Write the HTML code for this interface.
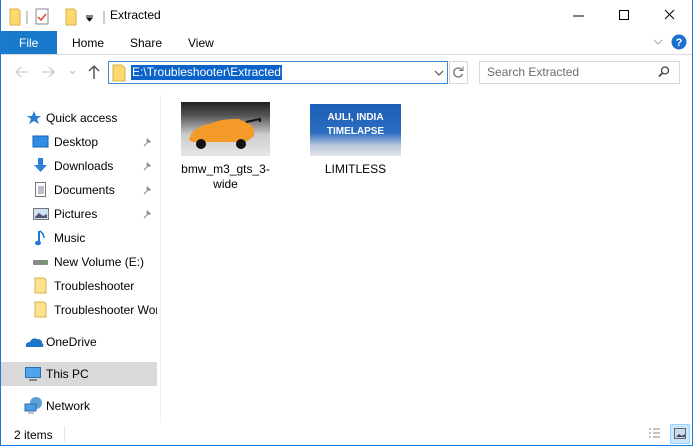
<!DOCTYPE html>
<html><head><meta charset="utf-8">
<style>
*{margin:0;padding:0;box-sizing:border-box}
body{width:693px;height:446px;overflow:hidden;background:#fff;font-family:"Liberation Sans",sans-serif;font-size:12px;color:#000;position:relative}
.abs{position:absolute}
.frame{position:absolute;left:0;top:0;width:693px;height:446px;border:1px solid #1a7ad4;border-top:none;pointer-events:none}
.t{position:absolute;white-space:nowrap}
.nav .t{font-size:12px}
</style></head><body>
<svg class="abs" style="left:8px;top:6px" width="100" height="22">
<path d="M2 3h8l2 2v14H2z" fill="#fcd96f" stroke="#d9b24a"/>
<line x1="19" y1="5" x2="19" y2="18" stroke="#999"/>
<rect x="28" y="3" width="12" height="15" fill="#fff" stroke="#888"/>
<path d="M30 11l3 3 5-6" stroke="#d43" fill="none" stroke-width="1.5"/>
<path d="M58 3h8l2 2v14H58z" fill="#fcd96f" stroke="#d9b24a"/>
<path d="M78 10h7M79 12l2.5 3 2.5-3z" stroke="#000" fill="#000"/>
<line x1="96" y1="5" x2="96" y2="18" stroke="#999"/>
</svg>
<div class="t" style="left:110px;top:8px;font-size:12px">Extracted</div>
<svg class="abs" style="left:560px;top:6px" width="130" height="20">
<line x1="13" y1="10" x2="24" y2="10" stroke="#000"/>
<rect x="59.5" y="4.5" width="9" height="9" fill="none" stroke="#000"/>
<path d="M105 4l9 9M114 4l-9 9" stroke="#000"/>
</svg>
<div class="abs" style="left:1px;top:31px;width:56px;height:23px;background:#1979ca"></div>
<div class="t" style="left:19px;top:36px;color:#fff">File</div>
<div class="t" style="left:72px;top:36px">Home</div>
<div class="t" style="left:130px;top:36px">Share</div>
<div class="t" style="left:188px;top:36px">View</div>
<svg class="abs" style="left:650px;top:33px" width="40" height="20">
<path d="M4 7l4 4 4-4" stroke="#aaa" fill="none"/>
<circle cx="29" cy="9" r="7.5" fill="#1d6fd1"/>
<text x="29" y="13" font-size="11" font-weight="bold" fill="#fff" text-anchor="middle" font-family="Liberation Sans">?</text>
</svg>
<div class="abs" style="left:1px;top:54px;width:691px;height:1px;background:#dadbdc"></div>
<svg class="abs" style="left:10px;top:62px" width="95" height="20">
<path d="M6 10h12M6 10l5-5M6 10l5 5" stroke="#ccc" fill="none" stroke-width="1.3"/>
<path d="M32 10h12M44 10l-5-5M44 10l-5 5" stroke="#ccc" fill="none" stroke-width="1.3"/>
<path d="M60 9l2.5 2.5 2.5-2.5" stroke="#bbb" fill="none"/>
<path d="M84 17V4M84 4l-5 5M84 4l5 5" stroke="#555" fill="none" stroke-width="1.5"/>
</svg>
<div class="abs" style="left:108px;top:61px;width:340px;height:23px;border:1px solid #3c8ad6"></div>
<svg class="abs" style="left:112px;top:64px" width="16" height="18"><path d="M1 1h9l3 3v13H1z" fill="#fcd96f" stroke="#d9b24a"/></svg>
<div class="t" style="left:131px;top:65px;background:#0a63c9;color:#fff;padding:0 1px;line-height:15px">E:\Troubleshooter\Extracted</div>
<svg class="abs" style="left:432px;top:66px" width="14" height="14"><path d="M3 5l4 4 4-4" stroke="#444" fill="none"/></svg>
<div class="abs" style="left:449px;top:61px;width:19px;height:23px;border:1px solid #d9d9d9"></div>
<svg class="abs" style="left:451px;top:65px" width="15" height="15"><path d="M11 5A4.5 4.5 0 1 0 11.5 9" stroke="#777" fill="none" stroke-width="1.3"/><path d="M8 3.5h4v-4" stroke="#777" fill="none" transform="translate(0,2)"/></svg>
<div class="abs" style="left:479px;top:61px;width:201px;height:23px;border:1px solid #d9d9d9"></div>
<div class="t" style="left:487px;top:65px;color:#6d6d6d">Search Extracted</div>
<svg class="abs" style="left:657px;top:65px" width="14" height="14"><circle cx="8" cy="5.5" r="3.5" stroke="#444" fill="none" stroke-width="1.3"/><path d="M5.5 8L2 11.5" stroke="#444" stroke-width="1.6"/></svg>
<div class="abs" style="left:1px;top:362px;width:156px;height:24px;background:#d9d9d9"></div>
<div class="abs" style="left:160px;top:95px;width:1px;height:327px;background:#f0f0f0"></div>
<div class="nav">
<svg class="abs" style="left:24px;top:110px" width="20" height="16"><path d="M10 1l2 5h5l-4 3 2 5-5-3-5 3 2-5-4-3h5z" fill="#2a7fd4"/></svg>
<div class="t" style="left:46px;top:111px">Quick access</div>
<svg class="abs" style="left:32px;top:134px" width="18" height="16"><rect x="1" y="2" width="15" height="11" fill="#2f8de4" stroke="#1560b0"/></svg>
<div class="t" style="left:54px;top:135px">Desktop</div>
<svg class="abs" style="left:32px;top:157px" width="18" height="18"><path d="M6 1h5v7h4l-6.5 7L2 8h4z" fill="#2f80d8"/></svg>
<div class="t" style="left:54px;top:159px">Downloads</div>
<svg class="abs" style="left:34px;top:181px" width="14" height="18"><rect x="1.5" y="1.5" width="10" height="14" fill="#fff" stroke="#777"/><path d="M4 6h6M4 8h6M4 10h6M4 12h6" stroke="#779"/></svg>
<div class="t" style="left:54px;top:183px">Documents</div>
<svg class="abs" style="left:32px;top:206px" width="18" height="16"><rect x="1.5" y="2.5" width="15" height="11" fill="#cfe0ee" stroke="#777"/><path d="M3 11l4-4 4 3 4-2v4H3z" fill="#557"/></svg>
<div class="t" style="left:54px;top:207px">Pictures</div>
<svg class="abs" style="left:34px;top:229px" width="14" height="18"><path d="M5 2v11" stroke="#1e7ad6" stroke-width="2"/><ellipse cx="4" cy="14" rx="3" ry="2.3" fill="#1e7ad6"/><path d="M6 2q4 3 4 7" stroke="#1e7ad6" fill="none" stroke-width="1.5"/></svg>
<div class="t" style="left:54px;top:231px">Music</div>
<svg class="abs" style="left:32px;top:258px" width="18" height="10"><rect x="1" y="2" width="15" height="5" rx="1" fill="#888"/><rect x="12" y="3" width="2" height="2" fill="#3c3"/></svg>
<div class="t" style="left:54px;top:255px">New Volume (E:)</div>
<svg class="abs" style="left:34px;top:277px" width="14" height="18"><path d="M1 1h9l2 2v13H1z" fill="#fde38e" stroke="#d9b24a"/></svg>
<div class="t" style="left:54px;top:279px">Troubleshooter</div>
<svg class="abs" style="left:34px;top:301px" width="14" height="18"><path d="M1 1h9l2 2v13H1z" fill="#fde38e" stroke="#d9b24a"/></svg>
<div class="t" style="left:54px;top:303px;width:103px;overflow:hidden">Troubleshooter Work</div>
<svg class="abs" style="left:142px;top:136px" width="12" height="96"><g fill="#888"><path d="M3 9l3-3M5 2l4 4-2 1-2-2-1 2z"/><path d="M3 33l3-3M5 26l4 4-2 1-2-2-1 2z"/><path d="M3 57l3-3M5 50l4 4-2 1-2-2-1 2z"/><path d="M3 81l3-3M5 74l4 4-2 1-2-2-1 2z"/></g><g stroke="#888"><path d="M2 10l4-4M2 34l4-4M2 58l4-4M2 82l4-4"/></g></svg>
<svg class="abs" style="left:24px;top:335px" width="20" height="14"><path d="M2 12q-1-5 4-5q2-5 7-3q5 0 5 4q2 1 1 4z" fill="#1e74c9"/></svg>
<div class="t" style="left:46px;top:335px">OneDrive</div>
<svg class="abs" style="left:24px;top:366px" width="20" height="17"><rect x="1.5" y="1.5" width="15" height="10" fill="#4fa5ec" stroke="#2a6eb5"/><path d="M5 14h8" stroke="#888" stroke-width="2"/></svg>
<div class="t" style="left:46px;top:367px">This PC</div>
<svg class="abs" style="left:24px;top:396px" width="20" height="18"><circle cx="12" cy="7" r="6" fill="#5aa0d8"/><rect x="1" y="8" width="11" height="7" fill="#4f9be0" stroke="#2a6eb5"/><path d="M4 17h6" stroke="#888"/></svg>
<div class="t" style="left:46px;top:399px">Network</div>
</div>
<div class="abs" style="left:181px;top:102px;width:89px;height:54px;background:linear-gradient(180deg,#222 0,#555 25%,#ccc 60%,#e6e6e6 100%)"></div>
<svg class="abs" style="left:181px;top:102px" width="89" height="54"><path d="M8 38q2-12 20-16q15-6 30-5l10 5q6 3 5 12l-8 6H12z" fill="#f39a28"/><circle cx="20" cy="42" r="5" fill="#111"/><circle cx="60" cy="42" r="5" fill="#111"/><path d="M65 20l14-3v3" stroke="#111" stroke-width="2" fill="none"/></svg>
<div class="t" style="left:181px;top:162px;width:89px;text-align:center;white-space:normal;line-height:15px">bmw_m3_gts_3-<br>wide</div>
<div class="abs" style="left:310px;top:104px;width:91px;height:52px;background:linear-gradient(180deg,#1e5fb8 0,#2a6cc0 55%,#b9c9dc 80%,#e3e6ea 100%)"></div>
<div class="t" style="left:310px;top:111px;width:91px;text-align:center;color:#fff;font-weight:bold;font-size:10px;line-height:14px">AULI, INDIA<br>TIMELAPSE</div>
<div class="t" style="left:310px;top:162px;width:91px;text-align:center">LIMITLESS</div>
<div class="t" style="left:14px;top:428px">2 items</div>
<div class="abs" style="left:64px;top:426px;width:1px;height:16px;background:#e5e5e5"></div>
<svg class="abs" style="left:646px;top:424px" width="46" height="20">
<g stroke="#888"><path d="M3 5h2M3 9h2M3 13h2M7 5h7M7 9h7M7 13h7"/></g>
<rect x="24.5" y="0.5" width="19" height="19" fill="#cce8ff" stroke="#99d1ff"/>
<rect x="28.5" y="4.5" width="11" height="10" fill="#cde" stroke="#666"/>
<path d="M30 13l3-3 3 2 3-2v3z" fill="#446"/>
</svg>
<div class="frame"></div>
</body></html>
